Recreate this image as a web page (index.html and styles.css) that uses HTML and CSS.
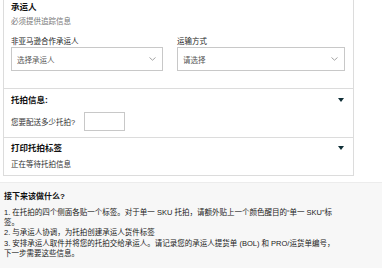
FILE: index.html
```html
<!DOCTYPE html>
<html lang="zh-CN">
<head>
  <meta charset="UTF-8">
  <meta name="viewport" content="width=device-width, initial-scale=1.0">
  <title>托拍配送</title>
  <link rel="stylesheet" href="styles.css">
</head>
<body>
  <div class="card">
    <div class="section carrier">
      <h3 class="section-title">承运人</h3>
      <p class="hint">必须提供追踪信息</p>
      <div class="field-row">
        <div class="field field-left">
          <label class="field-label">非亚马逊合作承运人</label>
          <div class="select">
            <span>选择承运人</span>
            <svg class="chevron" width="7" height="4" viewBox="0 0 7 4"><polyline points="0.5,0.5 3.5,3.2 6.5,0.5" fill="none" stroke="#999" stroke-width="0.9"/></svg>
          </div>
        </div>
        <div class="field field-right">
          <label class="field-label">运输方式</label>
          <div class="select">
            <span>请选择</span>
            <svg class="chevron" width="7" height="4" viewBox="0 0 7 4"><polyline points="0.5,0.5 3.5,3.2 6.5,0.5" fill="none" stroke="#999" stroke-width="0.9"/></svg>
          </div>
        </div>
      </div>
    </div>

    <div class="section pallets">
      <div class="section-head">
        <h3 class="section-title">托拍信息:</h3>
        <span class="caret"></span>
      </div>
      <div class="question">
        <span class="question-text">您要配送多少托拍?</span>
        <input class="count-input" type="text">
      </div>
    </div>

    <div class="section labels">
      <div class="section-head">
        <h3 class="section-title">打印托拍标签</h3>
        <span class="caret"></span>
      </div>
      <p class="status">正在等待托拍信息</p>
    </div>
  </div>

  <div class="next-steps">
    <h4>接下来该做什么?</h4>
    <ol class="steps">
      <li>1. 在托拍的四个侧面各贴一个标签。对于单一 SKU 托拍，请额外贴上一个颜色醒目的“单一 SKU”标签。</li>
      <li>2. 与承运人协调，为托拍创建承运人货件标签</li>
      <li>3. 安排承运人取件并将您的托拍交给承运人。请记录您的承运人提货单 (BOL) 和 PRO/运货单编号，下一步需要这些信息。</li>
    </ol>
  </div>
</body>
</html>
```

FILE: styles.css
```css
body {
  margin: 0;
  background: #fff;
  font-family: "Liberation Sans", "Noto Sans CJK SC", sans-serif;
  color: #222;
}

.card {
  width: 349px;
  margin-left: 3px;
  border: 1px solid #dcdcdc;
  border-top: none;
}

.section {
  padding: 0 8px 0 7px;
}

.section + .section {
  border-top: 1px solid #dcdcdc;
}

.section-title {
  margin: 0;
  font-size: 8.5px;
  line-height: 12px;
  font-weight: bold;
  color: #111;
}

.carrier {
  padding-top: 1px;
  padding-bottom: 17px;
}

.hint {
  margin: 4px 0 0;
  font-size: 7.5px;
  line-height: 10px;
  color: #777;
}

.field-row {
  display: flex;
  margin-top: 10px;
}

.field-left {
  width: 152px;
}

.field-right {
  width: 168px;
  margin-left: 14px;
}

.field-label {
  display: block;
  font-size: 7.5px;
  line-height: 10px;
  color: #222;
}

.select {
  display: flex;
  align-items: center;
  justify-content: space-between;
  height: 22px;
  padding: 0 6px 0 5px;
  border: 1px solid #c8c8c8;
  font-size: 7.5px;
  color: #555;
}

.chevron {
  display: block;
}

.section-head {
  display: flex;
  align-items: center;
  justify-content: space-between;
}

.caret {
  width: 0;
  height: 0;
  margin-right: 1px;
  border-left: 3px solid transparent;
  border-right: 3px solid transparent;
  border-top: 4px solid #0f2e36;
}

.pallets {
  padding-top: 5px;
  padding-bottom: 6px;
}

.question {
  display: flex;
  align-items: center;
  margin-top: 6px;
  font-size: 7.5px;
  color: #333;
}

.question-text {
  width: 73px;
}

.count-input {
  width: 39px;
  height: 17px;
  margin: 0;
  padding: 0;
  border: 1px solid #c8c8c8;
  outline: none;
}

.labels {
  padding-top: 4px;
  padding-bottom: 5px;
}

.status {
  margin: 6px 0 0;
  font-size: 7.5px;
  line-height: 10px;
  color: #333;
}

.next-steps {
  margin-top: 6px;
  padding: 8px 44px 20px 4px;
  background: #f7f7f7;
  border-top: 1px solid #ececec;
}

.next-steps h4 {
  margin: 0;
  font-size: 8px;
  line-height: 12px;
  font-weight: bold;
  color: #111;
}

.steps {
  margin: 5px 0 0;
  padding: 0;
  list-style: none;
  font-size: 7.5px;
  line-height: 10.2px;
  color: #222;
}
```
